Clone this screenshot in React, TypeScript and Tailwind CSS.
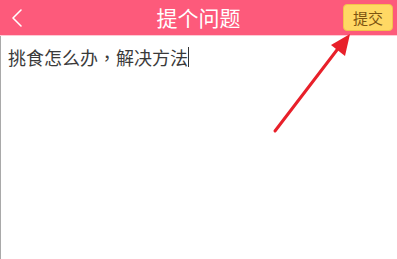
import React from "react";

const font = { fontFamily: '"Noto Sans CJK SC", "Noto Sans", sans-serif' };

function BackIcon() {
  return (
    <svg width="14" height="20" viewBox="0 0 14 20" fill="none">
      <path d="M11 2 L3 10 L11 18" stroke="#ffffff" strokeWidth="1.6" strokeLinecap="round" strokeLinejoin="round" />
    </svg>
  );
}

function Arrow() {
  return (
    <svg className="absolute left-0 top-0 pointer-events-none" width="397" height="259" viewBox="0 0 397 259">
      <line x1="275" y1="131" x2="340" y2="46" stroke="#e8202a" strokeWidth="3" strokeLinecap="round" />
      <polygon points="350,34 331,45 345,56" fill="#e8202a" />
    </svg>
  );
}

export default function App() {
  return (
    <div className="relative w-[397px] h-[259px] overflow-hidden bg-white" style={font}>
      <div className="flex items-center h-[36px] bg-[#fd5a7b] border-b border-[#ffc9d4]">
        <div className="w-[60px] pl-[10px] flex items-center">
          <BackIcon />
        </div>
        <div className="flex-1 text-center text-white text-[21px] leading-none">提个问题</div>
        <div className="w-[60px] flex justify-end pr-[4px]">
          <button className="w-[50px] h-[27px] rounded-[4px] bg-[#ffd864] border border-[#f2c24a] text-[#7d5410] text-[15px] leading-none">
            提交
          </button>
        </div>
      </div>
      <div className="h-[223px] border-l border-[#a9a9a9] pl-[7px] pt-[10px]">
        <div className="flex items-center text-[18px] leading-[22px] text-[#3a3a3a]">
          <span>
            挑食怎么办
            <span style={{ fontFamily: '"Noto Sans CJK TC", sans-serif' }}>，</span>
            解决方法
          </span>
          <span className="w-px h-[20px] bg-[#333]" />
        </div>
      </div>
      <Arrow />
    </div>
  );
}
